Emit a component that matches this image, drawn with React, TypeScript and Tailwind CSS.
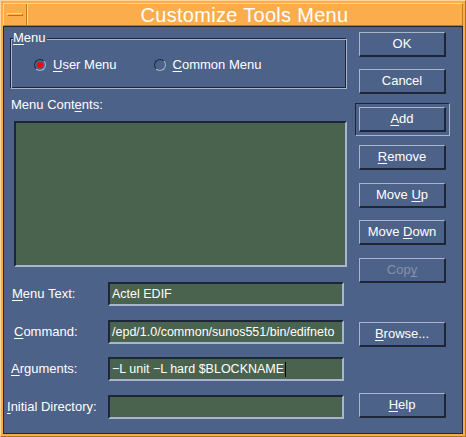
import type { ReactNode } from 'react'

const FONT = "font-['Liberation_Sans',Arial,sans-serif]"

function Btn({ children, disabled }: { children: ReactNode; disabled?: boolean }) {
  return (
    <div
      className={`h-[25px] w-[87px] flex items-center justify-center border border-t-[#a9b5cb] border-l-[#a9b5cb] border-b-2 border-r-2 border-b-[#1c2638] border-r-[#1c2638] text-[13px] ${
        disabled ? 'text-[#8591a8]' : 'text-white'
      }`}
    >
      <span className="whitespace-pre">{children}</span>
    </div>
  )
}

function Field({ value, cursor }: { value?: string; cursor?: boolean }) {
  return (
    <div className="h-[24px] w-[236px] flex items-center bg-[#4a634f] border-2 border-t-[#1c2638] border-l-[#1c2638] border-b-[#a9b5cb] border-r-[#a9b5cb] pl-[2px] text-[12.5px] text-white whitespace-nowrap overflow-hidden">
      <span>{value}</span>
      {cursor && <span className="ml-[1px] w-px h-[15px] bg-black" />}
    </div>
  )
}

function Radio({ on, children }: { on?: boolean; children: ReactNode }) {
  return (
    <div className="flex items-center gap-[7px] text-[13px] text-white">
      <span className="w-[12px] h-[12px] rounded-full flex items-center justify-center border border-t-[#1c2638] border-l-[#1c2638] border-b-[#a9b5cb] border-r-[#a9b5cb]">
        {on && <span className="w-[6px] h-[6px] rounded-full bg-[#ff0000]" />}
      </span>
      <span>{children}</span>
    </div>
  )
}

export default function App() {
  return (
    <div className={`${FONT} w-[466px] h-[437px] bg-[#fbad4c] border border-t-[#fdd49c] border-l-[#fdd49c] border-b-[#b87222] border-r-[#b87222] p-[2px] flex flex-col`}>
      {/* title bar */}
      <div className="h-[23px] flex border border-t-[#fdd49c] border-l-[#fdd49c] border-b-[#c07a2a] border-r-[#c07a2a]">
        <div className="w-[23px] flex items-center justify-center border-r border-r-[#c07a2a] shadow-[1px_0_0_#fdd49c]">
          <span className="w-[16px] h-[3px] border border-t-[#fdd49c] border-l-[#fdd49c] border-b-[#b87222] border-r-[#b87222]" />
        </div>
        <div className="flex-1 flex items-center justify-center text-white text-[20px] leading-none tracking-[0.3px]">
          Customize Tools Menu
        </div>
      </div>

      {/* body */}
      <div className="flex-1 flex bg-[#4d6288] border border-[#1c2638]">
        <div className="w-[346px] flex flex-col">
          <div className="relative ml-[6px] mt-[11px] w-[337px] h-[51px] border border-t-[#1c2638] border-l-[#1c2638] border-b-[#a9b5cb] border-r-[#a9b5cb] shadow-[inset_1px_1px_0_#a9b5cb,inset_-1px_-1px_0_#1c2638] flex items-center gap-[37px] pl-[23px] pt-[2px]">
            <span className="absolute left-[2px] -top-[9px] bg-[#4d6288] text-[13px] text-white leading-[16px] pr-[1px]">
              <u className="underline-offset-2">M</u>enu
            </span>
            <Radio on>
              <u className="underline-offset-2">U</u>ser Menu
            </Radio>
            <Radio>
              <u className="underline-offset-2">C</u>ommon Menu
            </Radio>
          </div>

          <div className="ml-[7px] mt-[8px] text-[13px] leading-[16px] text-white">
            Menu Cont<u className="underline-offset-2">e</u>nts:
          </div>

          <div className="ml-[10px] mt-[8px] w-[333px] h-[146px] bg-[#4a634f] border-2 border-t-[#1c2638] border-l-[#1c2638] border-b-[#a9b5cb] border-r-[#a9b5cb]" />

          <div className="mt-[15px] flex items-center">
            <span className="w-[104px] pl-[8px] text-[13px] text-white"><u className="underline-offset-2">M</u>enu Text:</span>
            <Field value="Actel EDIF" />
          </div>
          <div className="mt-[14px] flex items-center">
            <span className="w-[104px] pl-[10px] text-[13px] text-white"><u className="underline-offset-2">C</u>ommand:</span>
            <Field value="/epd/1.0/common/sunos551/bin/edifneto" />
          </div>
          <div className="mt-[13px] flex items-center">
            <span className="w-[104px] pl-[7px] text-[13px] text-white"><u className="underline-offset-2">A</u>rguments:</span>
            <Field value="−L unit −L hard $BLOCKNAME" cursor />
          </div>
          <div className="mt-[14px] flex items-center">
            <span className="w-[104px] pl-[3px] text-[13px] text-white whitespace-nowrap"><u className="underline-offset-2">I</u>nitial Directory:</span>
            <Field />
          </div>
        </div>

        <div className="flex flex-col pl-[9px]">
          <div className="mt-[5px]"><Btn>OK</Btn></div>
          <div className="mt-[12px]"><Btn>Cancel</Btn></div>
          <div className="mt-[9px] -ml-[4px] w-[95px] p-[3px] border border-t-[#1c2638] border-l-[#1c2638] border-b-[#a9b5cb] border-r-[#a9b5cb]">
            <Btn><u className="underline-offset-2">A</u>dd</Btn>
          </div>
          <div className="mt-[9px]"><Btn><u className="underline-offset-2">R</u>emove</Btn></div>
          <div className="mt-[13px]"><Btn>Move <u className="underline-offset-2">U</u>p</Btn></div>
          <div className="mt-[12px]"><Btn>Move <u className="underline-offset-2">D</u>own</Btn></div>
          <div className="mt-[13px]"><Btn disabled>Cop<u className="underline-offset-2">y</u></Btn></div>
          <div className="mt-[39px]"><Btn><u className="underline-offset-2">B</u>rowse...</Btn></div>
          <div className="mt-[46px]"><Btn><u className="underline-offset-2">H</u>elp</Btn></div>
        </div>
      </div>
    </div>
  )
}
